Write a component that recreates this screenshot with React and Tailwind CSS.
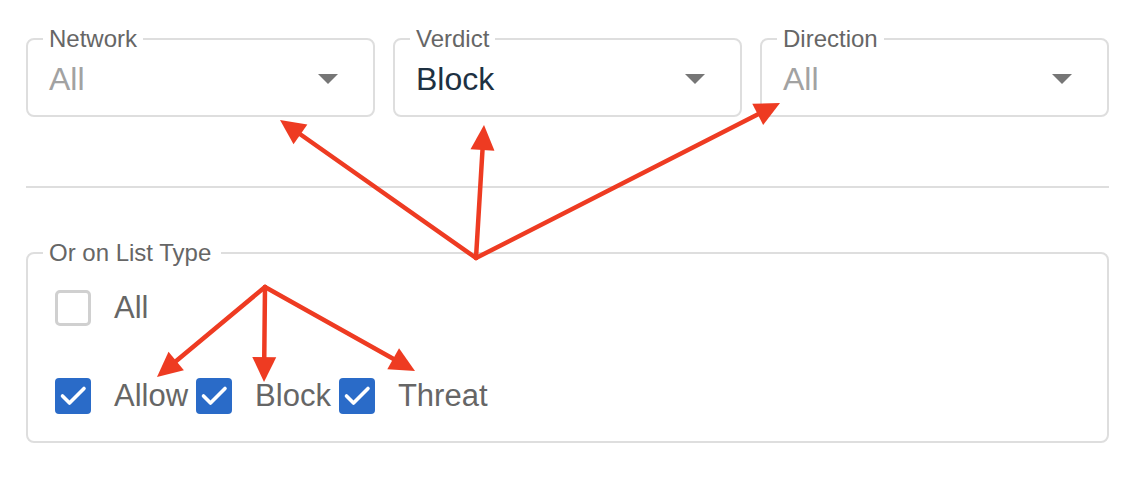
import React from 'react'

const RED = '#ee3b22'

function Caret() {
  return (
    <svg width="20" height="10" viewBox="0 0 20 10" className="shrink-0">
      <path d="M0 0 L20 0 L10 10 Z" fill="#767676" />
    </svg>
  )
}

function SelectField({ label, value, placeholder }) {
  return (
    <fieldset className="flex-1 min-w-0 border-2 border-[#dedede] rounded-[8px] pl-[15px] pr-[35px] pb-[16px]">
      <legend className="px-[6px] text-[24px] leading-[24px] text-[#666]">{label}</legend>
      <div className="mt-[8px] pl-[6px] h-[40px] flex items-center justify-between">
        <span className={placeholder ? 'text-[32px] leading-[40px] text-[#a2a2a2]' : 'text-[32px] leading-[40px] text-[#1d3142]'}>
          {value}
        </span>
        <Caret />
      </div>
    </fieldset>
  )
}

function Checkbox({ checked }) {
  if (!checked) {
    return <div className="w-[36px] h-[36px] shrink-0 rounded-[5px] border-[3px] border-[#d0d0d0]" />
  }
  return (
    <div className="w-[36px] h-[36px] shrink-0 rounded-[4px] bg-[#2a6bc8] flex items-center justify-center">
      <svg width="36" height="36" viewBox="0 0 36 36">
        <path d="M7.5 18 L14.5 25 L29 10.5" fill="none" stroke="#fff" strokeWidth="3.6" strokeLinecap="round" strokeLinejoin="round" />
      </svg>
    </div>
  )
}

function CheckItem({ label, checked }) {
  return (
    <div className="flex items-center gap-[23px]">
      <Checkbox checked={checked} />
      <span className="text-[31px] leading-[36px] text-[#666]">{label}</span>
    </div>
  )
}

// annotation arrow: shaft + filled head
function Arrow({ from, to }) {
  const [x1, y1] = from
  const [x2, y2] = to
  const dx = x2 - x1
  const dy = y2 - y1
  const len = Math.hypot(dx, dy)
  const ux = dx / len
  const uy = dy / len
  const hl = 25
  const hw = 12
  const bx = x2 - ux * hl
  const by = y2 - uy * hl
  const pts = `${x2},${y2} ${bx - uy * hw},${by + ux * hw} ${bx + uy * hw},${by - ux * hw}`
  return (
    <g>
      <line x1={x1} y1={y1} x2={bx + ux * 2} y2={by + uy * 2} stroke={RED} strokeWidth="4.5" strokeLinecap="round" />
      <polygon points={pts} fill={RED} />
    </g>
  )
}

export default function App() {
  return (
    <div className="relative w-[1134px] h-[482px] overflow-hidden bg-white pl-[26px] pr-[25px] pt-[27px] font-['Liberation_Sans',Arial,sans-serif]">
      <div className="flex gap-[18px]">
        <SelectField label="Network" value="All" placeholder />
        <SelectField label="Verdict" value="Block" />
        <SelectField label="Direction" value="All" placeholder />
      </div>

      <div className="mt-[69px] h-[2px] bg-[#dedede]" />

      <fieldset className="mt-[53px] min-w-0 border-2 border-[#dedede] rounded-[8px] pl-[15px] pb-[27px]">
        <legend className="pl-[6px] pr-[10px] text-[24px] leading-[24px] text-[#666]">Or on List Type</legend>
        <div className="pl-[12px] mt-[25px]">
          <CheckItem label="All" />
        </div>
        <div className="pl-[12px] mt-[52px] flex items-center gap-[8px]">
          <CheckItem label="Allow" checked />
          <CheckItem label="Block" checked />
          <CheckItem label="Threat" checked />
        </div>
      </fieldset>

      {/* red annotation arrows over the screenshot */}
      <svg className="absolute inset-0 pointer-events-none" width="1134" height="482" viewBox="0 0 1134 482">
        <Arrow from={[476, 258]} to={[280, 120]} />
        <Arrow from={[476, 258]} to={[484, 125]} />
        <Arrow from={[476, 258]} to={[780, 103]} />
        <Arrow from={[265, 287]} to={[157, 377]} />
        <Arrow from={[265, 287]} to={[264, 382]} />
        <Arrow from={[265, 287]} to={[415, 371]} />
      </svg>
    </div>
  )
}
